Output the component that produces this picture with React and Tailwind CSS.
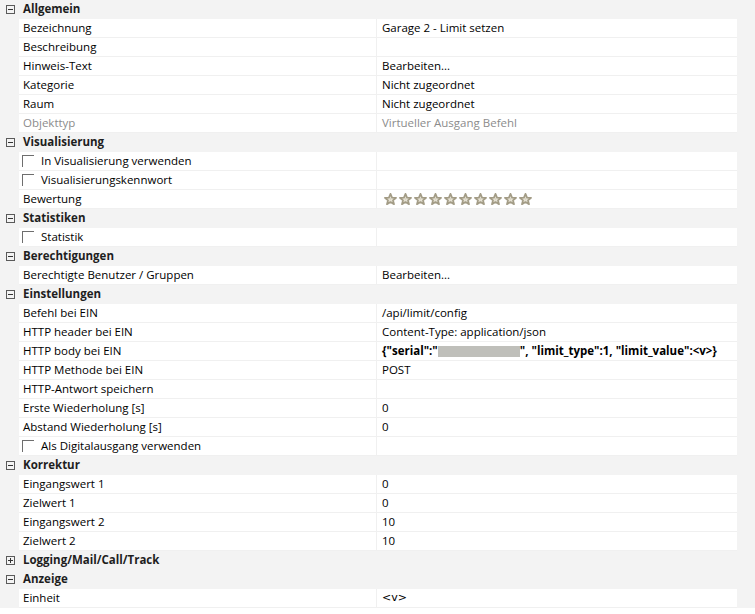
import React from 'react';

const FONT = { fontFamily: '"Open Sans", "Noto Sans", sans-serif' };

const Toggle = ({ open }) => (
    <div className="w-[9px] h-[9px] border border-[#5a5a5a] relative bg-[#f3f3f3]">
        <div className="absolute left-[1px] right-[1px] top-[3px] h-px bg-[#333]" />
        {!open && <div className="absolute top-[1px] bottom-[1px] left-[3px] w-px bg-[#333]" />}
    </div>
);

const Star = () => (
    <svg width="13" height="12" viewBox="0 0 24 22" className="mr-[2px]">
        <path
            d="M12 1.5 L14.9 8.3 L22.3 8.7 L16.6 13.4 L18.5 20.6 L12 16.6 L5.5 20.6 L7.4 13.4 L1.7 8.7 L9.1 8.3 Z"
            fill="#e7e3d6"
            stroke="#a39c86"
            strokeWidth="3.2"
            strokeLinejoin="round"
        />
        <path d="M12 8 L13.4 11 L12 14 L10.6 11 Z" fill="#d8d2c0" />
    </svg>
);

const Header = ({ label, open = true }) => (
    <div className="flex items-center h-[19px] bg-[#f3f3f3]">
        <div className="w-[19px] flex justify-center items-center pl-[1px]">
            <Toggle open={open} />
        </div>
        <span className="pl-[4px] -mt-[2px] text-[11.5px] font-bold text-[#1e1e1e] leading-[18px]">{label}</span>
    </div>
);

const Row = ({ name, value, check, muted, children, bold }) => (
    <div className="flex h-[19px] bg-[#f3f3f3]">
        <div className="w-[19px]" />
        <div className="flex w-[718px] bg-white border-b border-[#f0f0f0]">
            <div className="w-[358px] border-r border-[#f0f0f0] flex items-center pl-[4px]">
                {check && <div className="w-[12px] h-[12px] border-t border-l border-[#6e6e6e] mr-[7px] -ml-[1px]" />}
                <span className={`text-[11.5px] leading-[18px] ${muted ? 'text-[#8c8c8c]' : 'text-black'}`}>{name}</span>
            </div>
            <div className={`flex items-center pl-[5px] text-[11.5px] leading-[18px] ${muted ? 'text-[#8c8c8c]' : 'text-black'} ${bold ? 'font-bold' : ''}`}>
                {children || value}
            </div>
        </div>
    </div>
);

export default function App() {
    return (
        <div className="w-[755px] h-[614px] bg-[#f3f3f3] overflow-hidden" style={FONT}>
            <Header label="Allgemein" />
            <Row name="Bezeichnung" value="Garage 2 - Limit setzen" />
            <Row name="Beschreibung" value="" />
            <Row name="Hinweis-Text" value="Bearbeiten..." />
            <Row name="Kategorie" value="Nicht zugeordnet" />
            <Row name="Raum" value="Nicht zugeordnet" />
            <Row name="Objekttyp" value="Virtueller Ausgang Befehl" muted />

            <Header label="Visualisierung" />
            <Row name="In Visualisierung verwenden" check />
            <Row name="Visualisierungskennwort" check />
            <Row name="Bewertung">
                <div className="flex items-center pl-[2px]">
                    {Array.from({ length: 10 }).map((_, i) => <Star key={i} />)}
                </div>
            </Row>

            <Header label="Statistiken" />
            <Row name="Statistik" check />

            <Header label="Berechtigungen" />
            <Row name="Berechtigte Benutzer / Gruppen" value="Bearbeiten..." />

            <Header label="Einstellungen" />
            <Row name="Befehl bei EIN" value="/api/limit/config" />
            <Row name="HTTP header bei EIN" value="Content-Type: application/json" />
            <Row name="HTTP body bei EIN" bold>
                <span>{'{"serial":"'}</span>
                <span className="inline-block w-[82px] h-[11px] bg-[#bfbfba]" />
                <span>{'", "limit_type":1, "limit_value":<v>}'}</span>
            </Row>
            <Row name="HTTP Methode bei EIN" value="POST" />
            <Row name="HTTP-Antwort speichern" value="" />
            <Row name="Erste Wiederholung [s]" value="0" />
            <Row name="Abstand Wiederholung [s]" value="0" />
            <Row name="Als Digitalausgang verwenden" check />

            <Header label="Korrektur" />
            <Row name="Eingangswert 1" value="0" />
            <Row name="Zielwert 1" value="0" />
            <Row name="Eingangswert 2" value="10" />
            <Row name="Zielwert 2" value="10" />

            <Header label="Logging/Mail/Call/Track" open={false} />
            <Header label="Anzeige" />
            <Row name="Einheit">
                <span className="text-[11px]" style={{ fontFamily: '"DejaVu Sans", sans-serif' }}>{'<v>'}</span>
            </Row>
            <div className="h-[10px] bg-white" />
        </div>
    );
}
